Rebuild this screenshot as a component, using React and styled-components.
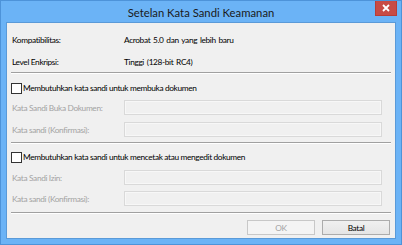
import React from "react";
import styled, { createGlobalStyle } from "styled-components";

const GlobalStyle = createGlobalStyle`
  html, body {
    margin: 0;
    padding: 0;
    background: #ffffff;
  }
  body {
    font-family: Lato, "Noto Sans", sans-serif;
  }
`;

const Frame = styled.div`
  width: 402px;
  height: 245px;
  box-sizing: border-box;
  background: #6bb3f6;
  border: 1px solid #4d93d9;
  display: flex;
  flex-direction: column;
`;

const TitleBar = styled.div`
  height: 21px;
  display: flex;
  align-items: center;
  justify-content: center;
  position: relative;
`;

const Title = styled.span`
  font-size: 11.3px;
  color: #1a1a1a;
  margin-top: 1px;
`;

const CloseButton = styled.div`
  position: absolute;
  top: 0;
  right: 4px;
  width: 22px;
  height: 15px;
  background: #c74b45;
  border: 1px solid #b83d37;
  border-top: none;
  box-sizing: border-box;
  display: flex;
  align-items: center;
  justify-content: center;
`;

const Client = styled.div`
  flex: 1;
  margin: 0 5px 5px 5px;
  background: #f0f0f0;
  border: 1px solid #5a9ad8;
  padding: 8px 4px 0 4px;
  display: flex;
  flex-direction: column;
  font-size: 8.3px;
  letter-spacing: -0.35px;
  color: #000;
`;

const InfoRow = styled.div`
  height: 18px;
  display: flex;
  align-items: center;
  margin-top: ${(p) => p.gap || 0}px;
`;

const Label = styled.span`
  width: 112px;
  padding-left: 1px;
  color: ${(p) => (p.disabled ? "#a3a3a3" : "#000")};
  white-space: nowrap;
`;

const Value = styled.span`
  white-space: nowrap;
  word-spacing: 1px;
`;

const Separator = styled.div`
  height: 1px;
  background: #a0a0a0;
  border-bottom: 1px solid #ffffff;
  margin-top: ${(p) => p.gap || 0}px;
`;

const CheckRow = styled.label`
  height: 16px;
  display: flex;
  align-items: center;
  margin-top: ${(p) => p.gap || 0}px;
  white-space: nowrap;
`;

const Box = styled.span`
  width: 11px;
  height: 11px;
  box-sizing: border-box;
  border: 1px solid #333333;
  background: #ffffff;
  margin-right: 1px;
`;

const FieldRow = styled.div`
  height: 15px;
  display: flex;
  align-items: center;
  margin-top: ${(p) => p.gap || 0}px;
`;

const Input = styled.div`
  width: 258px;
  height: 15px;
  box-sizing: border-box;
  border: 1px solid #d9d9d9;
  box-shadow: inset 0 0 0 1px #f7f7f7;
  background: #f0f0f0;
`;

const ButtonBar = styled.div`
  display: flex;
  justify-content: flex-end;
  gap: 7px;
  margin-top: 6px;
  padding-right: 1px;
`;

const Button = styled.div`
  width: 68px;
  height: 15px;
  box-sizing: border-box;
  display: flex;
  align-items: center;
  justify-content: center;
  border: 1px solid ${(p) => (p.disabled ? "#c8c8c8" : "#acacac")};
  background: ${(p) =>
    p.disabled ? "#f4f4f4" : "linear-gradient(#f0f0f0, #e5e5e5)"};
  color: ${(p) => (p.disabled ? "#a3a3a3" : "#000")};
`;

const Field = ({ label, gap }) => (
  <FieldRow gap={gap}>
    <Label disabled>{label}</Label>
    <Input />
  </FieldRow>
);

export default function App() {
  return (
    <>
      <GlobalStyle />
      <Frame>
        <TitleBar>
          <Title>Setelan Kata Sandi Keamanan</Title>
          <CloseButton>
            <svg width="8" height="8" viewBox="0 0 8 8">
              <path d="M1 1L7 7M7 1L1 7" stroke="#fff" strokeWidth="1.8" />
            </svg>
          </CloseButton>
        </TitleBar>
        <Client>
          <InfoRow>
            <Label>Kompatibilitas:</Label>
            <Value>Acrobat 5.0 dan yang lebih baru</Value>
          </InfoRow>
          <InfoRow gap={4}>
            <Label>Level Enkripsi:</Label>
            <Value>Tinggi (128-bit RC4)</Value>
          </InfoRow>
          <Separator gap={1} />
          <CheckRow gap={6}>
            <Box />
            Membutuhkan kata sandi untuk membuka dokumen
          </CheckRow>
          <Field gap={4} label="Kata Sandi Buka Dokumen:" />
          <Field gap={7} label="Kata sandi (Konfirmasi):" />
          <Separator gap={5} />
          <CheckRow gap={5}>
            <Box />
            Membutuhkan kata sandi untuk mencetak atau mengedit dokumen
          </CheckRow>
          <Field gap={5} label="Kata Sandi Izin:" />
          <Field gap={6} label="Kata sandi (Konfirmasi):" />
          <Separator gap={6} />
          <ButtonBar>
            <Button disabled>OK</Button>
            <Button>Batal</Button>
          </ButtonBar>
        </Client>
      </Frame>
    </>
  );
}
